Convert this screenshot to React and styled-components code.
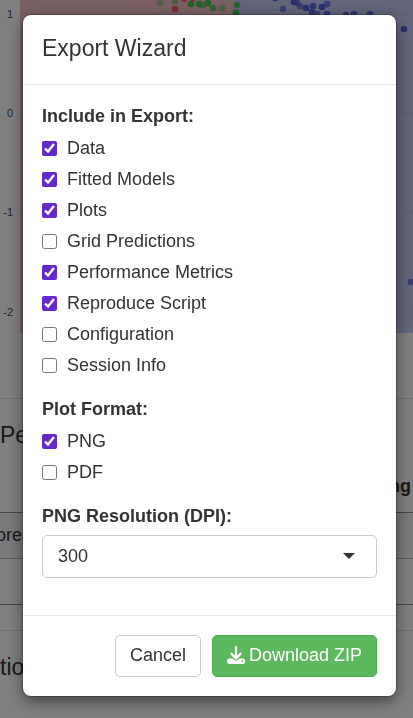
import React, { useState } from "react";
import { FaDownload } from "react-icons/fa6";
import styled, { createGlobalStyle } from "styled-components";

const colors = {
  text: "#333",
  line: "#e5e5e5",
  border: "#ccc",
  accent: "#6429c8",
  success: "#5cb85c",
  red: "#f23d4f",
  green: "#3fc24f",
  blue: "#5560dc",
};

const exportItems = [
  { id: "data", label: "Data", on: true },
  { id: "models", label: "Fitted Models", on: true },
  { id: "plots", label: "Plots", on: true },
  { id: "grid", label: "Grid Predictions", on: false },
  { id: "metrics", label: "Performance Metrics", on: true },
  { id: "script", label: "Reproduce Script", on: true },
  { id: "config", label: "Configuration", on: false },
  { id: "session", label: "Session Info", on: false },
];

const formatItems = [
  { id: "png", label: "PNG", on: true },
  { id: "pdf", label: "PDF", on: false },
];

const ticks = [
  { label: "1", y: 14 },
  { label: "0", y: 113 },
  { label: "-1", y: 212 },
  { label: "-2", y: 312 },
];

// x, y, opacity
const points = {
  green: [
    [160, 3, 0.5],
    [175, 1, 0.6],
    [191, 4, 1],
    [199, 4, 1],
    [203, 5, 0.7],
    [208, 3, 1],
    [213, 8, 0.8],
    [222, 8, 0.5],
    [237, 5, 0.9],
    [236, 13, 1],
  ],
  red: [
    [175, 9, 0.8],
    [184, -1, 0.7],
    [193, -2, 0.8],
  ],
  blue: [
    [275, -2, 1],
    [283, 9, 0.7],
    [294, 2, 1],
    [297, 3, 0.8],
    [300, 6, 0.7],
    [306, 8, 1],
    [313, 6, 0.9],
    [322, 7, 1],
    [327, 4, 0.8],
    [312, 12, 0.9],
    [317, 14, 0.7],
    [327, 14, 0.9],
    [346, 15, 0.9],
    [354, 14, 0.9],
    [370, 14, 0.9],
    [404, 29, 1],
    [411, 282, 0.8],
  ],
};

const BoundaryChart = () => (
  <Chart aria-hidden="true">
    <rect x="20" width="100%" height="333" fill="#c6cdf6" />
    <rect x="20" width="213" height="333" fill="#f4c0c6" />
    {ticks.map((tick) => (
      <g key={tick.label}>
        <line x1="20" x2="100%" y1={tick.y} y2={tick.y} />
        <text x="13" y={tick.y + 4}>
          {tick.label}
        </text>
      </g>
    ))}
    <line x1="178" x2="178" y1="0" y2="333" />
    {Object.keys(points).map((name) =>
      points[name].map(([x, y, opacity]) => (
        <circle
          key={`${name}-${x}-${y}`}
          cx={x}
          cy={y}
          r="3.3"
          fill={colors[name]}
          fillOpacity={opacity}
        />
      ))
    )}
  </Chart>
);

const CheckGroup = ({ title, items }) => {
  const [checked, setChecked] = useState(
    items.filter((item) => item.on).map((item) => item.id)
  );

  const toggle = (id) => {
    setChecked(
      checked.includes(id) ? checked.filter((c) => c !== id) : [...checked, id]
    );
  };

  return (
    <Group>
      <Legend>{title}</Legend>
      {items.map((item) => (
        <CheckRow key={item.id}>
          <Checkbox
            type="checkbox"
            checked={checked.includes(item.id)}
            onChange={() => toggle(item.id)}
          />
          {item.label}
        </CheckRow>
      ))}
    </Group>
  );
};

const App = () => {
  const [dpi, setDpi] = useState("300");

  return (
    <>
      <GlobalStyle />
      <Page>
        <BoundaryChart />
        <SectionTitle>Per</SectionTitle>
        <Table>
          <thead>
            <tr>
              <th></th>
              <th>ng</th>
            </tr>
          </thead>
          <tbody>
            <tr>
              <td>orest</td>
              <td></td>
            </tr>
            <tr>
              <td></td>
              <td></td>
            </tr>
          </tbody>
        </Table>
        <SectionTitle $compact>tions</SectionTitle>
      </Page>
      <Backdrop>
        <Dialog role="dialog" aria-modal="true" aria-labelledby="wizard-title">
          <Header>
            <h4 id="wizard-title">Export Wizard</h4>
          </Header>
          <Body>
            <CheckGroup title="Include in Export:" items={exportItems} />
            <CheckGroup title="Plot Format:" items={formatItems} />
            <Field>
              <label htmlFor="dpi">PNG Resolution (DPI):</label>
              <SelectBox>
                <select
                  id="dpi"
                  value={dpi}
                  onChange={(e) => setDpi(e.target.value)}
                >
                  <option>150</option>
                  <option>300</option>
                  <option>600</option>
                </select>
                <Caret />
              </SelectBox>
            </Field>
          </Body>
          <Footer>
            <Button type="button">Cancel</Button>
            <Button type="button" $primary>
              <FaDownload size={18} />
              Download ZIP
            </Button>
          </Footer>
        </Dialog>
      </Backdrop>
    </>
  );
};

const GlobalStyle = createGlobalStyle`
  * {
    box-sizing: border-box;
  }
  body {
    margin: 0;
    background: #fff;
    color: ${colors.text};
    font-family: "Liberation Sans", Arial, sans-serif;
    font-size: 18px;
    line-height: 25px;
  }
`;

const Page = styled.main`
  height: 100vh;
  overflow: hidden;
`;

const Chart = styled.svg`
  display: block;
  width: 100%;
  height: 333px;
  line {
    stroke: #000;
    stroke-opacity: 0.06;
  }
  text {
    fill: #444;
    font-size: 11px;
    text-anchor: end;
  }
`;

const SectionTitle = styled.h3`
  margin: ${({ $compact }) => ($compact ? "25px 0 0" : "65px 0 0")};
  padding-top: 21px;
  border-top: 1px solid #ddd;
  font-size: 23px;
  font-weight: 400;
  line-height: 30px;
`;

const Table = styled.table`
  width: 100%;
  margin-top: 14px;
  border-collapse: collapse;
  th {
    height: 48px;
    padding: 0 2px 2px 0;
    border-bottom: 1px solid #888;
    text-align: right;
    vertical-align: middle;
  }
  td {
    height: 46px;
    padding: 0;
    border-bottom: 1px solid #bbb;
    text-indent: -4px;
  }
  tbody tr:first-child {
    background: #f4f4f4;
  }
  tbody tr:last-child td {
    border-color: #888;
  }
`;

const Backdrop = styled.div`
  position: fixed;
  inset: 0;
  padding: 15px 17px 0 23px;
  background: rgba(0, 0, 0, 0.5);
  overflow: auto;
`;

const Dialog = styled.section`
  max-width: 600px;
  margin: 0 auto;
  border-radius: 8px;
  background: #fff;
  box-shadow: 0 0 0 1px rgba(0, 0, 0, 0.2), 0 5px 15px rgba(0, 0, 0, 0.5);
`;

const Header = styled.header`
  padding: 18px 19px 20px;
  border-bottom: 1px solid ${colors.line};
  h4 {
    margin: 0;
    font-size: 23px;
    font-weight: 400;
    line-height: 31px;
  }
`;

const Body = styled.div`
  padding: 19px;
`;

const Group = styled.fieldset`
  display: flex;
  flex-direction: column;
  gap: 6px;
  margin: 0 0 19px;
  padding: 0;
  border: 0;
`;

const Legend = styled.legend`
  margin-bottom: 7px;
  padding: 0;
  font-weight: 700;
`;

const CheckRow = styled.label`
  display: flex;
  align-items: center;
  gap: 10px;
`;

const Checkbox = styled.input`
  width: 15px;
  height: 15px;
  margin: 0;
  accent-color: ${colors.accent};
`;

const Field = styled.div`
  display: flex;
  flex-direction: column;
  gap: 6px;
  margin-bottom: 18px;
  label {
    font-weight: 700;
  }
`;

const SelectBox = styled.div`
  position: relative;
  select {
    appearance: none;
    display: block;
    width: 100%;
    height: 43px;
    padding: 0 15px;
    border: 1px solid ${colors.border};
    border-radius: 5px;
    background: #fff;
    color: ${colors.text};
    font: inherit;
  }
`;

const Caret = styled.span`
  position: absolute;
  top: 18px;
  right: 22px;
  border: 6px solid transparent;
  border-top-color: ${colors.text};
  border-bottom: 0;
  pointer-events: none;
`;

const Footer = styled.footer`
  display: flex;
  justify-content: flex-end;
  gap: 11px;
  padding: 19px;
  border-top: 1px solid ${colors.line};
`;

const Button = styled.button`
  display: flex;
  align-items: center;
  gap: 4px;
  height: 42px;
  padding: 0 14px 2px;
  border: 1px solid ${({ $primary }) => ($primary ? "#4cae4c" : colors.border)};
  border-radius: 5px;
  background: ${({ $primary }) => ($primary ? colors.success : "#fff")};
  color: ${({ $primary }) => ($primary ? "#fff" : colors.text)};
  font: inherit;
  cursor: pointer;
`;

export default App;
